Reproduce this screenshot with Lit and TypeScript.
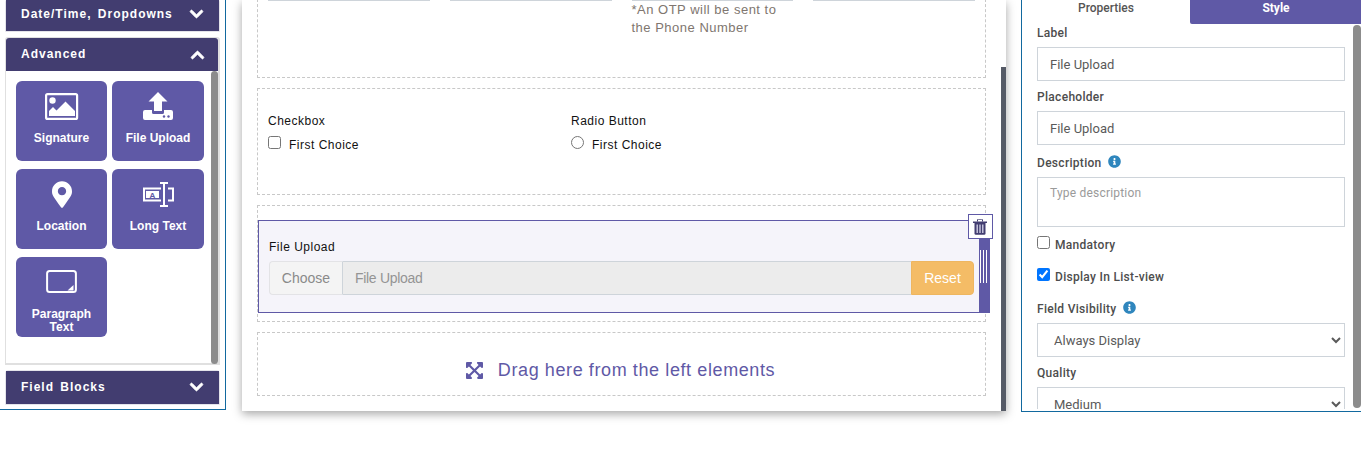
import { LitElement, html, css } from "lit";
import { customElement } from "lit/decorators.js";

const CHEV = "M207.029 381.476L12.686 187.132c-9.373-9.373-9.373-24.569 0-33.941l22.667-22.667c9.357-9.357 24.522-9.375 33.901-.04L224 284.505l154.745-154.021c9.379-9.335 24.544-9.317 33.901.04l22.667 22.667c9.373 9.373 9.373 24.569 0 33.941L240.971 381.476c-9.373 9.372-24.569 9.372-33.942 0z";
const INFO = "M256 8C119.043 8 8 119.083 8 256c0 136.997 111.043 248 248 248s248-111.003 248-248C504 119.083 392.957 8 256 8zm0 110c23.196 0 42 18.804 42 42s-18.804 42-42 42-42-18.804-42-42 18.804-42 42-42zm56 254c0 6.627-5.373 12-12 12h-88c-6.627 0-12-5.373-12-12v-24c0-6.627 5.373-12 12-12h12v-64h-12c-6.627 0-12-5.373-12-12v-24c0-6.627 5.373-12 12-12h64c6.627 0 12 5.373 12 12v100h12c6.627 0 12 5.373 12 12v24z";
const PIN = "M172.268 501.67C26.97 291.031 0 269.413 0 192 0 85.961 85.961 0 192 0s192 85.961 192 192c0 77.413-26.97 99.031-172.268 309.67-9.535 13.774-29.93 13.773-39.464 0zM192 272c44.183 0 80-35.817 80-80s-35.817-80-80-80-80 35.817-80 80 35.817 80 80 80z";
const EXPAND = "M448.1 344v112c0 13.3-10.7 24-24 24h-112c-21.4 0-32.1-25.9-17-41l36.2-36.2L224 295.6 116.800 402.900 153 439c15.100 15.100 4.400 41-17 41H24c-13.300 0-24-10.700-24-24V344c0-21.400 25.900-32.100 41-17l36.200 36.200L184.500 256 77.200 148.700 41 185c-15.100 15.100-41 4.400-41-17V56c0-13.300 10.700-24 24-24h112c21.400 0 32.100 25.900 17 41l-36.200 36.200L224 216.400l107.300-107.300L295.100 73c-15.100-15.100-4.400-41 17-41h112c13.300 0 24 10.700 24 24v112c0 21.400-25.900 32.100-41 17l-36.200-36.200L263.600 256l107.300 107.300 36.200-36.200c15.100-15.200 41-4.500 41 16.900z";

const chevron = (up = false) => html`<svg class="chev ${up ? "up" : ""}" viewBox="0 120 448 272" preserveAspectRatio="none"><path d=${CHEV} fill="#fff" stroke="#fff" stroke-width="30"/></svg>`;
const info = () => html`<svg class="info" viewBox="0 0 512 512"><path d=${INFO} fill="#2f86bd"/></svg>`;

const icons: Record<string, unknown> = {
  image: html`<svg width="34" height="27" viewBox="0 0 34 27"><rect x="1.100" y="1.100" width="31" height="24.800" rx="1.500" fill="none" stroke="#fff" stroke-width="2.200"/><circle cx="7.500" cy="7.500" r="3.200" fill="#fff"/><path d="M4 23v-5l4-4 3.500 3.500 9-9L30 18v5z" fill="#fff"/></svg>`,
  upload: html`<svg width="30" height="28" viewBox="0 0 30 28"><path d="M15 0l9.500 9.500H19v9.500h-8V9.500H5.500z" fill="#fff"/><path d="M2 18h7v2.500a1.500 1.500 0 0 0 1.500 1.500h9a1.500 1.500 0 0 0 1.500-1.500V18h7a2 2 0 0 1 2 2v6a2 2 0 0 1-2 2H2a2 2 0 0 1-2-2v-6a2 2 0 0 1 2-2z" fill="#fff"/><circle cx="21" cy="24.500" r="1.200" fill="#5f59a6"/><circle cx="25.500" cy="24.500" r="1.200" fill="#5f59a6"/></svg>`,
  pin: html`<svg width="20" height="27" viewBox="0 0 384 512"><path d=${PIN} fill="#fff"/></svg>`,
  longtext: html`<svg width="31" height="25" viewBox="0 0 31 25"><path d="M18 6.500H1v12h17M25 6.500h5v12h-5" fill="none" stroke="#fff" stroke-width="2"/><path d="M17 1h8M17 24h8M21 1v23" fill="none" stroke="#fff" stroke-width="2"/><rect x="3" y="9" width="13" height="7" fill="#fff"/><text x="9.500" y="15.500" font-family="Liberation Sans" font-size="8" font-weight="700" text-anchor="middle" fill="#5f59a6">A</text></svg>`,
  para: html`<svg width="31" height="23" viewBox="0 0 31 23"><rect x="1.100" y="1.100" width="28.800" height="20.800" rx="2.500" fill="none" stroke="#fff" stroke-width="2"/><path d="M27.500 15v5.500h-6z" fill="#fff"/></svg>`,
};

@customElement("app-root")
export class AppRoot extends LitElement {
  static styles = css`
    :host { display: block; width: 1361px; height: 460px; overflow: hidden; background: #fff; }
    * { box-sizing: border-box; }
    .page { display: flex; align-items: flex-start; height: 460px; }

    /* left palette */
    .left { position: relative; width: 226px; height: 410px; margin-right: 16px; padding: 0 5px; border-right: 1px solid #12699f; border-bottom: 1px solid #12699f; overflow: hidden; display: flex; flex-direction: column; }
    .acc { border: 1px solid #e4e4ea; border-radius: 3px 3px 0 0; }
    .acc.first { margin-top: -1px; height: 33px; margin-bottom: 5px; }
    .acc.open { height: 328px; margin-bottom: 5px; position: relative; border-color: #e0e0e0; border-width: 1px 2px 2px 1px; }
    .acc.last { height: 35px; }
    .head { height: 31px; background: #423d70; display: flex; align-items: center; justify-content: space-between; padding: 0 16px 2px 15px; color: #fff; font: 700 12px "Liberation Sans", sans-serif; letter-spacing: 1px; word-spacing: 2px; }
    .first .head { padding-bottom: 3px; }
    .last .head { height: 33px; padding-bottom: 1px; }
    .open .head { height: 33px; padding-right: 14px; border-radius: 3px 3px 0 0; }
    .chev { width: 13px; height: 8px; display: block; overflow: visible; }
    .chev.up { transform: scaleY(-1); margin-top: 2px; }
    .tiles { display: grid; grid-template-columns: 91px 92px; grid-auto-rows: 80px; gap: 8px 5px; padding: 10px 0 0 10px; }
    .tile { background: #5f59a6; border-radius: 6px; color: #fff; font: 700 12px/13px "Liberation Sans", sans-serif; text-align: center; display: flex; flex-direction: column; align-items: center; padding: 0 12px; }
    .ic { height: 51px; padding-top: 12px; flex: none; display: flex; justify-content: center; align-items: flex-start; }
    .ic.upload { padding-top: 11px; }
    .ic.longtext { padding-top: 13px; }
    .ic.para { padding-top: 13px; }
    .ic svg { display: block; }
    .bar { position: absolute; background: #8c8c8c; border-radius: 4px; }
    .left .bar { left: 205px; top: 33px; width: 7px; height: 293px; }

    /* canvas */
    .center { position: relative; width: 764px; height: 411px; flex: none; margin-right: 15px; padding: 0 20px 0 15px; background: #fff; box-shadow: 0 3px 9px rgba(0,0,0,.35); display: flex; flex-direction: column; gap: 10px; }
    .center > .scroll { position: absolute; right: 0; top: 67px; width: 5px; bottom: 0; background: #555a66; }
    .row { border: 1px dashed #c8c8c8; flex: none; }
    .row1 { height: 79px; margin-top: -1px; padding: 0 10px; }
    .cols { display: grid; grid-template-columns: repeat(4, 1fr); gap: 20px; }
    .line { height: 1px; background: #ced4da; }
    .otp { font: 13px/18px "Liberation Sans", sans-serif; letter-spacing: .5px; color: #80766f; }
    .row2 { height: 107px; padding: 24px 10px 0; display: grid; grid-template-columns: 303px 1fr; align-content: start; }
    .lab { font: 12px/16px "Liberation Sans", sans-serif; letter-spacing: .5px; color: #111; }
    .choice { display: flex; align-items: flex-start; margin-top: 7px; font: 12px/18px "Liberation Sans", sans-serif; letter-spacing: .5px; color: #111; height: 18px; }
    .choice input { width: 13px; height: 13px; margin: 0 8px 0 0; }
    .row3 { height: 117px; padding-top: 14px; position: relative; }
    .sel { position: relative; width: 732px; height: 93px; background: #f5f4fa; border: 1px solid #5f59a6; padding: 18px 15px 0 10px; }
    .group { display: flex; height: 34px; margin-top: 6px; font: 14px "Liberation Sans", sans-serif; }
    .choose { width: 74px; background: #f4f4f4; border: 1px solid #e3e3e6; border-radius: 4px 0 0 4px; border-right-color: #ced4da; color: #8a8a8a; display: flex; align-items: center; justify-content: center; }
    .fname { flex: 1; background: #ececec; border: solid #ced4da; border-width: 1px 0; color: #949494; font-size: 14px; letter-spacing: -.3px; display: flex; align-items: center; padding-left: 12px; }
    .reset { width: 63px; background: #f4bc66; border: 1px solid #eeb660; border-radius: 0 4px 4px 0; color: #fff; display: flex; align-items: center; justify-content: center; }
    .handle { position: absolute; right: -1px; top: 18px; width: 11px; bottom: -1px; background: #5f59a6; }
    .handle i { position: absolute; top: 11px; height: 33px; width: 1px; background: #fff; }
    .trash { position: absolute; right: -4px; top: -7px; width: 25px; height: 25px; background: #fff; border: 1px solid #5f59a6; display: flex; align-items: center; justify-content: center; padding-right: 1px; }
    .row4 { height: 64px; display: flex; align-items: center; justify-content: center; padding-top: 12px; color: #5f59a6; font: 18px "Liberation Sans", sans-serif; letter-spacing: .6px; gap: 15px; padding-right: 2px; }

    /* right props */
    .right { position: relative; width: 340px; height: 412px; flex: none; border-left: 1px solid #12699f; border-bottom: 1px solid #12699f; overflow: hidden; font-family: "Roboto", sans-serif; }
    .tabs { display: flex; height: 24px; }
    .tab { width: 168px; text-align: center; font-size: 12px; line-height: 16px; font-weight: 500; color: #555; }
    .tab.on { flex: 1; background: #5f59a6; color: #fff; font-weight: 700; border-radius: 0 0 0 2px; padding-left: 1px; }
    .form { padding: 0 15px; width: 338px; }
    .f { display: block; font: 500 12px/16px "Roboto", sans-serif; letter-spacing: .3px; color: #4d4d4d; }
    .f.tall { line-height: 18px; margin-bottom: 5px; }
    .f svg.info { width: 13px; height: 13px; margin-left: 3px; vertical-align: -1px; }
    .fi { display: block; width: 100%; height: 34px; border: 1px solid #ced4da; background: #fff; padding: 1px 12px 0; font: 13px "Roboto", sans-serif; color: #5a5a5a; outline: none; border-radius: 0; margin: 0; }
    textarea.fi { height: 50px; padding: 8px 12px; resize: none; font-size: 12px; letter-spacing: .2px; }
    textarea.fi::placeholder { color: #9a9a9a; }
    .check { display: flex; align-items: flex-start; height: 16px; line-height: 18px; }
    .check input { width: 13px; height: 13px; margin: 0 5px 0 0; accent-color: #0075ff; }
    .right .bar { right: 0; top: 25px; width: 8px; height: 383px; }
    .clip { position: absolute; left: 0; right: 0; bottom: 0; height: 2px; background: #fff; }
  `;

  private tile(icon: string, label: string) {
    return html`<div class="tile"><div class="ic ${icon}">${icons[icon]}</div><span>${label}</span></div>`;
  }

  render() {
    return html`<div class="page">
      <aside class="left">
        <div class="acc first"><div class="head"><span>Date/Time, Dropdowns</span>${chevron()}</div></div>
        <div class="acc open">
          <div class="head"><span>Advanced</span>${chevron(true)}</div>
          <div class="tiles">
            ${this.tile("image", "Signature")}
            ${this.tile("upload", "File Upload")}
            ${this.tile("pin", "Location")}
            ${this.tile("longtext", "Long Text")}
            ${this.tile("para", "Paragraph Text")}
          </div>
          <div class="bar"></div>
        </div>
        <div class="acc last"><div class="head"><span>Field Blocks</span>${chevron()}</div></div>
      </aside>

      <main class="center">
        <section class="row row1">
          <div class="cols">
            <div class="line"></div><div class="line"></div>
            <div><div class="line"></div><div class="otp">*An OTP will be sent to the Phone Number</div></div>
            <div class="line"></div>
          </div>
        </section>
        <section class="row row2">
          <div><div class="lab">Checkbox</div><label class="choice"><input type="checkbox" />First Choice</label></div>
          <div><div class="lab">Radio Button</div><label class="choice"><input type="radio" />First Choice</label></div>
        </section>
        <section class="row row3">
          <div class="sel">
            <div class="lab">File Upload</div>
            <div class="group">
              <div class="choose">Choose</div>
              <div class="fname">File Upload</div>
              <div class="reset">Reset</div>
            </div>
            <div class="handle"><i style="left:1px"></i><i style="left:4px"></i><i style="left:7px"></i></div>
            <div class="trash">
              <svg width="14" height="16" viewBox="0 0 14 16"><path d="M0 2.500h14v1.500H0z" fill="#423d70"/><path d="M4.500 2.500V1a.8.800 0 0 1 .8-.8h3.400a.8.800 0 0 1 .8.800v1.500" fill="none" stroke="#423d70" stroke-width="1"/><path d="M1.500 4h11v10.500a1.300 1.300 0 0 1-1.300 1.300H2.800a1.300 1.300 0 0 1-1.300-1.300z" fill="#423d70"/><path d="M4.200 5.500v8.500M7 5.500v8.500M9.800 5.500v8.500" stroke="#d8d6ea" stroke-width="1.300"/></svg>
            </div>
          </div>
        </section>
        <section class="row row4">
          <svg width="17" height="17" viewBox="0 32 448 448"><path fill="#5f59a6" d=${EXPAND}/></svg>
          <span>Drag here from the left elements</span>
        </section>
        <div class="scroll"></div>
      </main>

      <aside class="right">
        <div class="tabs"><div class="tab">Properties</div><div class="tab on">Style</div></div>
        <div class="form">
          <label class="f" style="margin-top:1px;margin-bottom:6px">Label</label>
          <input class="fi" value="File Upload" />
          <label class="f" style="margin-top:8px;margin-bottom:6px">Placeholder</label>
          <input class="fi" value="File Upload" />
          <label class="f tall" style="margin-top:9px">Description ${info()}</label>
          <textarea class="fi" placeholder="Type description"></textarea>
          <label class="f check" style="margin-top:9px"><input type="checkbox" />Mandatory</label>
          <label class="f check" style="margin-top:16px"><input type="checkbox" checked />Display In List-view</label>
          <label class="f tall" style="margin-top:16px">Field Visibility ${info()}</label>
          <select class="fi"><option>Always Display</option></select>
          <label class="f" style="margin-top:8px;margin-bottom:6px">Quality</label>
          <select class="fi"><option>Medium</option></select>
        </div>
        <div class="clip"></div>
        <div class="bar"></div>
      </aside>
    </div>`;
  }
}
